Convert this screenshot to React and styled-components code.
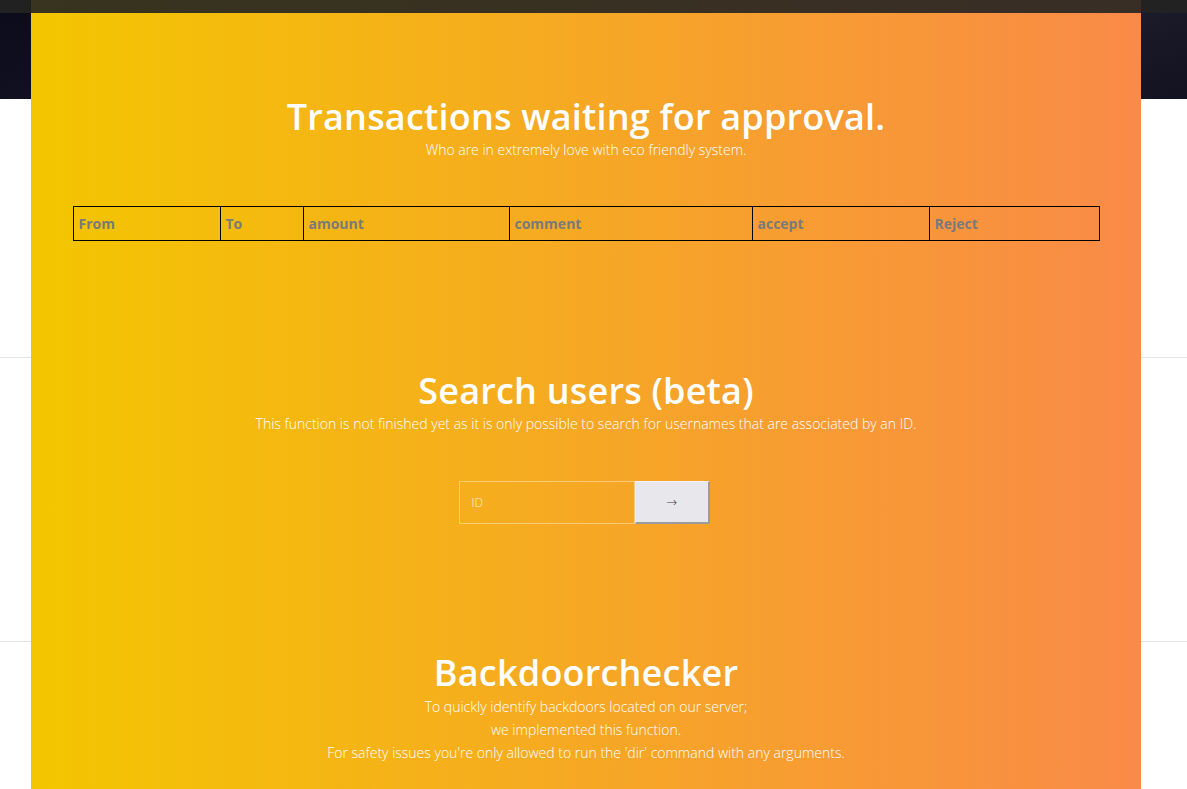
import React from "react"
import styled, { createGlobalStyle } from "styled-components"

const GlobalStyle = createGlobalStyle`
  html, body {
    margin: 0;
    padding: 0;
  }
  body {
    font-family: "Open Sans", "Noto Sans", sans-serif;
    background: #fff;
    overflow: hidden;
  }
`

const Page = styled.div`
  position: relative;
  height: 789px;
  overflow: hidden;
`

const TopBar = styled.header`
  position: absolute;
  top: 0;
  left: 0;
  right: 0;
  height: 13px;
  background: rgba(36, 35, 34, 0.9);
  z-index: 3;
`

const Backdrop = styled.div`
  display: flex;
  flex-direction: column;
`

const Hero = styled.div`
  height: 99px;
  background: linear-gradient(160deg, #0b0b1a 0%, #17172a 45%, #1f1f2d 70%, #121220 100%);
`

const Band = styled.section`
  height: ${props => props.$h}px;
  border-top: ${props => (props.$line ? "1px solid #e4e4e4" : "none")};
  box-sizing: border-box;
`

const Panel = styled.main`
  position: absolute;
  top: 0;
  bottom: 0;
  left: 31px;
  width: 1110px;
  box-sizing: border-box;
  padding: 95px 42px 0;
  background: linear-gradient(to right, #f3c600, #f98a48);
  color: #fff;
  z-index: 2;
`

const Block = styled.div`
  display: flex;
  flex-direction: column;
  align-items: center;
  margin-bottom: ${props => props.$after || 0}px;
`

const Title = styled.h2`
  margin: 0;
  font-size: 36px;
  line-height: 1.2;
  font-weight: 600;
  letter-spacing: 0.2px;
`

const Lead = styled.p`
  margin: 0;
  font-size: 14px;
  line-height: 23px;
  font-weight: 300;
  text-align: center;
`

const Table = styled.table`
  width: 100%;
  margin-top: 45px;
  border-collapse: collapse;
  table-layout: fixed;
`

const Th = styled.th`
  height: 33px;
  padding: 0 5px;
  border: 1px solid #000;
  text-align: left;
  font-size: 14px;
  font-weight: 700;
  color: #7a7a7a;
`

const SearchForm = styled.form`
  display: flex;
  margin-top: 46px;
  margin-right: 4px;
`

const Input = styled.input`
  width: 176px;
  height: 43px;
  box-sizing: border-box;
  padding: 0 12px;
  border: 1px solid rgba(255, 255, 255, 0.4);
  background: transparent;
  font-family: inherit;
  font-size: 12px;
  font-weight: 300;
  color: #fff;
  outline: none;

  &::placeholder {
    color: rgba(255, 255, 255, 0.85);
  }
`

const Go = styled.button`
  width: 75px;
  height: 43px;
  box-sizing: border-box;
  background: #e8e7ec;
  border-style: solid;
  border-width: 1px 2px 2px 1px;
  border-color: #f2f2f4 #9b9b9b #9b9b9b #f2f2f4;
  font-family: "DejaVu Sans", sans-serif;
  font-size: 13px;
  font-weight: 300;
  color: #444;
  padding: 0;
`

const columns = [
  ["From", 147],
  ["To", 83],
  ["amount", 206],
  ["comment", 243],
  ["accept", 177],
  ["Reject", 170],
]

export default function App() {
  return (
    <Page>
      <GlobalStyle />
      <TopBar />
      <Backdrop>
        <Hero />
        <Band $h={258} />
        <Band $h={284} $line />
        <Band $h={200} $line />
      </Backdrop>
      <Panel>
        <Block $after={128}>
          <Title>Transactions waiting for approval.</Title>
          <Lead>Who are in extremely love with eco friendly system.</Lead>
          <Table>
            <colgroup>
              {columns.map(([name, w]) => (
                <col key={name} style={{ width: w }} />
              ))}
            </colgroup>
            <thead>
              <tr>
                {columns.map(([name]) => (
                  <Th key={name}>{name}</Th>
                ))}
              </tr>
            </thead>
          </Table>
        </Block>
        <Block $after={127}>
          <Title>Search users (beta)</Title>
          <Lead>
            This function is not finished yet as it is only possible to search for usernames that are associated by an ID.
          </Lead>
          <SearchForm onSubmit={e => e.preventDefault()}>
            <Input placeholder="ID" />
            <Go type="submit">→</Go>
          </SearchForm>
        </Block>
        <Block>
          <Title>Backdoorchecker</Title>
          <Lead>
            To quickly identify backdoors located on our server;
            <br />
            we implemented this function.
            <br />
            For safety issues you're only allowed to run the 'dir' command with any arguments.
          </Lead>
        </Block>
      </Panel>
    </Page>
  )
}
